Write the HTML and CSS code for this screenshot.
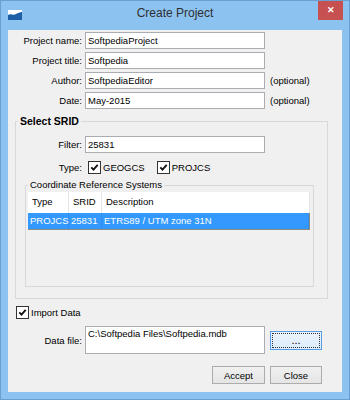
FILE: index.html
```html
<!DOCTYPE html>
<html lang="en">
<head>
    <meta charset="UTF-8">
    <title>Create Project</title>
    <link rel="stylesheet" href="styles.css">
</head>
<body>
    <div class="window">
        <div class="titlebar">
            <svg class="app-icon" viewBox="0 0 14 10">
                <rect width="14" height="10" fill="#fff"/>
                <path d="M0 5 C3 3 5 6 8 4 C10 3 12 2 14 2 V10 H0 Z" fill="#1c5fa6"/>
            </svg>
            <div class="title">Create Project</div>
            <div class="close">&#x2715;</div>
        </div>

        <div class="client">
            <div class="fields">
                <div class="row"><span class="lbl">Project name:</span><input class="field" value="SoftpediaProject"></div>
                <div class="row"><span class="lbl">Project title:</span><input class="field" value="Softpedia"></div>
                <div class="row"><span class="lbl">Author:</span><input class="field" value="SoftpediaEditor"><span class="note">(optional)</span></div>
                <div class="row"><span class="lbl">Date:</span><input class="field" value="May-2015"><span class="note">(optional)</span></div>
            </div>

            <fieldset class="group">
                <legend>Select SRID</legend>
                <div class="row filter-row"><span class="lbl">Filter:</span><input class="field" value="25831"></div>
                <div class="row type-row">
                    <span class="lbl">Type:</span>
                    <span class="check first"><svg viewBox="0 0 11 11"><path d="M2.3 5.3 L4.5 7.6 L8.7 2.8"/></svg></span>
                    <span class="check-text">GEOGCS</span>
                    <span class="check second"><svg viewBox="0 0 11 11"><path d="M2.3 5.3 L4.5 7.6 L8.7 2.8"/></svg></span>
                    <span class="check-text">PROJCS</span>
                </div>

                <fieldset class="subgroup">
                    <legend>Coordinate Reference Systems</legend>
                    <div class="crs-table">
                        <div class="crs-head">
                            <span>Type</span><span>SRID</span><span>Description</span>
                        </div>
                        <div class="crs-row selected">
                            <span>PROJCS</span><span>25831</span><span>ETRS89 / UTM zone 31N</span>
                        </div>
                    </div>
                </fieldset>
            </fieldset>

            <div class="row import-row">
                <span class="check"><svg viewBox="0 0 11 11"><path d="M2.3 5.3 L4.5 7.6 L8.7 2.8"/></svg></span>
                <span class="check-text">Import Data</span>
            </div>

            <div class="row data-row">
                <span class="lbl">Data file:</span>
                <textarea class="field area">C:\Softpedia Files\Softpedia.mdb</textarea>
                <button class="btn browse">...</button>
            </div>

            <div class="actions">
                <button class="btn accept">Accept</button>
                <button class="btn">Close</button>
            </div>
        </div>
    </div>
</body>
</html>
```

FILE: styles.css
```css
body {
    margin: 0;
    font-family: "Liberation Sans", Arial, sans-serif;
    font-size: 9.5px;
    color: #000;
}

.window {
    width: 350px;
    height: 400px;
    box-sizing: border-box;
    background: #8cc2ef;
    border: 1px solid #6a9fd3;
    display: flex;
    flex-direction: column;
}

/* title bar */
.titlebar {
    height: 29px;
    flex: none;
    display: grid;
    grid-template-columns: 1fr auto 1fr;
    align-items: start;
}

.app-icon {
    width: 14px;
    height: 10px;
    margin: 9px 0 0 7px;
}

.title {
    font-size: 12px;
    line-height: 25px;
    color: #2f2f2f;
}

.close {
    justify-self: end;
    width: 25px;
    height: 19px;
    margin-right: 6px;
    background: #c75050;
    color: #fff;
    font-size: 9px;
    font-weight: bold;
    line-height: 19px;
    text-align: center;
}

/* dialog body */
.client {
    flex: 1;
    margin: 0 7px 7px;
    background: #f0f0f0;
}

.fields {
    display: flex;
    flex-direction: column;
    gap: 3px;
    padding-top: 2px;
}

.row {
    display: flex;
    align-items: center;
}

.lbl {
    flex: none;
    width: 74px;
    margin-right: 3px;
    text-align: right;
}

.field {
    width: 180px;
    height: 17px;
    box-sizing: border-box;
    margin: 0;
    padding: 0 2px;
    border: 1px solid #abadb3;
    background: #fff;
    font: inherit;
    color: #000;
}

.note {
    margin-left: 5px;
}

/* group boxes */
.group {
    width: 313px;
    box-sizing: border-box;
    margin: 6px 0 0 7px;
    padding: 0 0 11px;
    min-width: 0;
    border: 1px solid #d9d9d9;
}

.group legend {
    margin-left: 2px;
    padding: 0 2px;
    font-size: 10.5px;
    font-weight: bold;
    line-height: 13px;
}

.group .lbl {
    width: 66px;
}

.filter-row {
    margin-top: 8px;
}

.type-row {
    margin-top: 8px;
}

.check {
    flex: none;
    width: 13px;
    height: 13px;
    box-sizing: border-box;
    border: 1px solid #333;
    background: #fff;
    display: inline-flex;
}

.check svg {
    width: 11px;
    height: 11px;
}

.check path {
    fill: none;
    stroke: #111;
    stroke-width: 1.8;
}

.check.first {
    margin-left: 3px;
}

.check.second {
    margin-left: 12px;
}

.check-text {
    margin-left: 2px;
}

.subgroup {
    width: 289px;
    box-sizing: border-box;
    margin: 5px 0 0 9px;
    padding: 0 0 56px;
    min-width: 0;
    border: 1px solid #d9d9d9;
}

.group .subgroup legend {
    font-size: 9.5px;
    font-weight: normal;
    line-height: 12px;
}

/* list of systems */
.crs-table {
    width: 282px;
    margin: 1px 0 0 2px;
}

.crs-head,
.crs-row {
    display: grid;
    grid-template-columns: 41px 33px 1fr;
}

.crs-head {
    height: 21px;
    line-height: 20px;
    background: #fff;
}

.crs-head span {
    padding-left: 4px;
    border-right: 1px solid #e5e5e5;
}

.crs-row {
    height: 17px;
    box-sizing: border-box;
    line-height: 16px;
}

.crs-row span {
    padding-left: 2px;
    border-right: 1px solid rgba(0, 0, 0, 0.08);
}

.crs-row.selected {
    background: #3399ff;
    color: #fff;
    border-bottom: 1px solid #8e8a84;
    border-right: 1px solid #8e8a84;
}

/* import */
.import-row {
    margin: 7px 0 0 8px;
}

.data-row {
    margin-top: 7px;
}

.area {
    height: 28px;
    padding: 2px 2px;
    resize: none;
    overflow: hidden;
    line-height: 10px;
}

.btn {
    height: 18px;
    width: 52px;
    box-sizing: border-box;
    padding: 0;
    margin: 0;
    border: 1px solid #acacac;
    background: linear-gradient(#f0f0f0, #e5e5e5);
    font: inherit;
    color: #000;
}

.browse {
    height: 19px;
    margin-left: 5px;
    border-color: #569de5;
    background: linear-gradient(#ecf4fc, #dcecfc);
    outline: 1px dotted #333;
    outline-offset: -3px;
    font-size: 11px;
    line-height: 10px;
}

.actions {
    display: flex;
    justify-content: flex-end;
    gap: 5px;
    margin-top: 12px;
    padding-right: 20px;
}

.accept {
    width: 53px;
}
```
